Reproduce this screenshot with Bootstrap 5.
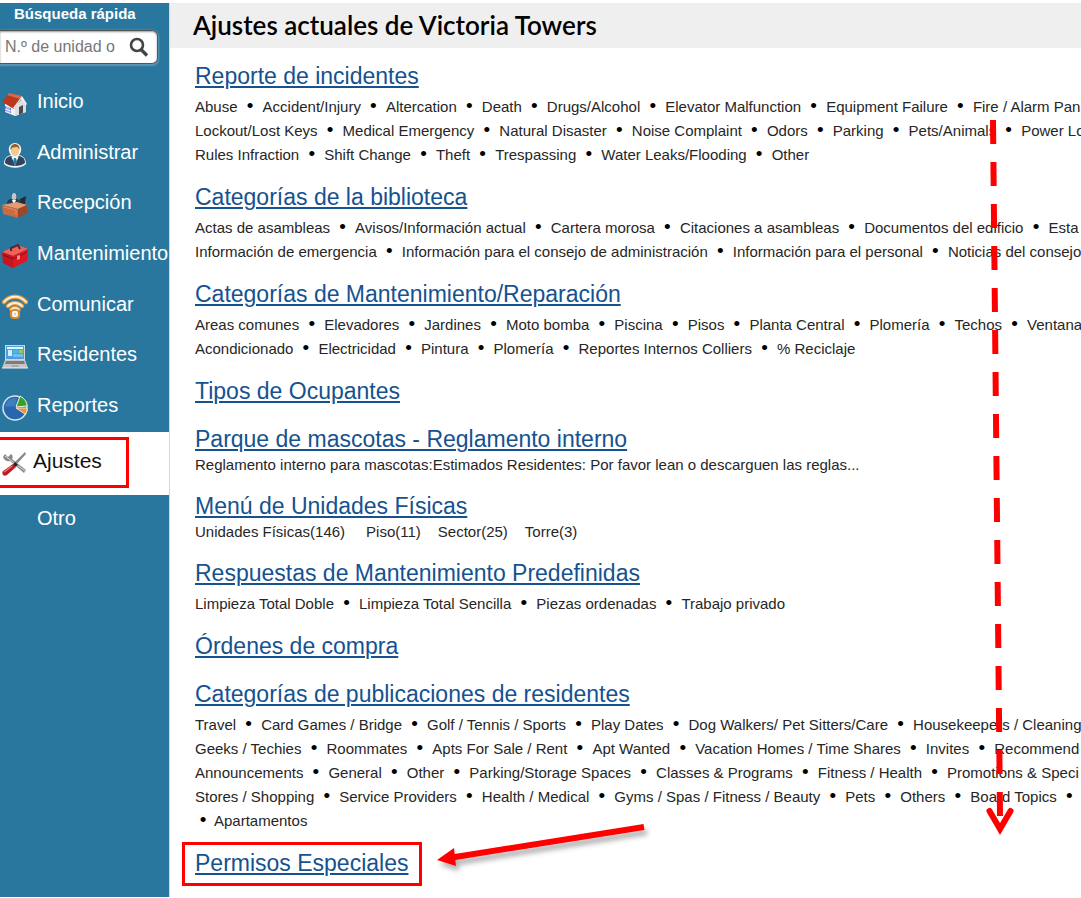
<!DOCTYPE html>
<html lang="es">
<head>
<meta charset="utf-8">
<meta name="viewport" content="width=device-width, initial-scale=1">
<title>Ajustes actuales de Victoria Towers</title>
<link href="https://cdn.jsdelivr.net/npm/bootstrap@5.3.0/dist/css/bootstrap.min.css" rel="stylesheet">
<style>
  body { font-family: "Liberation Sans", Arial, sans-serif; font-size: 15px; color: #262626; background: #fff; }
  .page { min-height: 100vh; padding: 3px 0 1px; }
  .sidebar { width: 170px; background: #29779e; border-right: 1px solid #c9dde7; }
  .quick-label { font-size: 15px; line-height: 22px; padding-left: 14px; }
  .quick-box { height: 34px; width: 158px; margin: 5px 0 12px; border: 1px solid #555; border-left: 0; border-radius: 0 6px 6px 0; box-shadow: 0 1px 2px 1px rgba(255,255,255,.25), inset 0 1px 2px rgba(0,0,0,.4); background: #fff; }
  .quick-box input { width: 118px; padding: 0 0 0 5px; font-size: 16px; line-height: 24px; background: transparent; }
  .quick-box input::placeholder { color: #777; opacity: 1; }
  .quick-box button { margin-left: 10px; line-height: 0; }
  .menu-main { height: 354px; margin-bottom: 2px; }
  .menu-item { font-size: 20px; line-height: 24px; color: #fff; text-decoration: none; white-space: nowrap; padding-left: 2px; gap: 9px; }
  .menu-item:hover { color: #fff; }
  .menu-item svg { width: 26px; height: 26px; margin-top: 6px; flex: none; }
  .menu-active { height: 63px; padding-top: 5px; background: #fff; }
  .menu-active .menu-item { color: #111; width: 129px; height: 51px; font-size: 21px; padding-bottom: 4px; border: 3px solid red; border-left: 0; gap: 5px; }
  .menu-other { height: 46px; }
  .menu-other .menu-item { padding-left: 37px; }
  .title-bar { height: 45px; background: #efefef; padding-left: 23px; }
  .title-bar h1 { font: 600 26px/45px Lato, sans-serif; color: #000; }
  .settings { padding: 10px 0 0 25px; white-space: nowrap; }
  .settings h2 { font-size: 23px; line-height: 36px; font-weight: 400; margin: 0; }
  .settings h2 a { color: #15528f; text-decoration-thickness: 2px; text-underline-offset: 2px; }
  .items { line-height: 24px; margin: 1px 0 12px; }
  .items b { display: inline-block; width: 25px; text-align: center; font-size: 19px; line-height: 20px; font-weight: 400; color: #000; }
  .items .lead-dot { width: 19px; padding-right: 3px; }
  .heading-only { margin-bottom: 12px; }
  .note { line-height: 14px; margin: 1px 0 16px; }
  .note span + span { margin-left: 17px; }
  .marked::after { content: ""; position: absolute; inset: -3px -14px -5px -13px; border: 3px solid red; pointer-events: none; }
  .arrows { pointer-events: none; }
</style>
</head>
<body>
<div class="page d-flex position-relative overflow-hidden">
  <aside class="sidebar flex-shrink-0 overflow-hidden">
    <form>
      <label class="quick-label text-white fw-bold d-block" for="quick">Búsqueda rápida</label>
      <div class="quick-box d-flex align-items-center">
        <input class="border-0" id="quick" type="text" placeholder="N.º de unidad o">
        <button class="btn border-0 p-0" type="button" aria-label="Buscar">
          <svg width="22" height="22" viewBox="0 0 22 22" fill="none" stroke="#444"><circle cx="9" cy="9" r="6" stroke-width="2.600"/><path d="M13 13.500l6 6" stroke-width="3.400"/></svg>
        </button>
      </div>
    </form>
    <nav aria-label="Principal">
      <div class="menu-main d-flex flex-column">
        <a class="menu-item d-flex align-items-center flex-fill" href="#">
          <svg viewBox="0 0 26 26"><path d="M3 12l10 4 7-8 4 4v9l-11 4-10-4z" fill="#f3f3f5"/><path d="M13 16l7-8 4 4v9l-11 4z" fill="#dedee2"/><path d="M0 11L7 2l13 3-8 13z" fill="#b9391f"/><path d="M7 2l13 3-2 3L5 4z" fill="#cf6c4d"/><path d="M20 5l5 8-1 1-5-6-7 10-1-1z" fill="#f8eee8"/><path d="M3 15l6 2v5l-6-2z" fill="#6871df"/><path d="M5 15v6M7 16v6M3 18l6 2" stroke="#eef"/><path d="M17 16l4-2v8l-4 2z" fill="#514b4b"/></svg>Inicio</a>
        <a class="menu-item d-flex align-items-center flex-fill" href="#">
          <svg viewBox="0 0 26 26"><path d="M2 22c0-6 3-8 7-9-3-3-4-11 4-12 8 1 7 9 4 12 4 1 7 3 7 9-5 5-17 5-22 0z" fill="#f2f4f6"/><path d="M3 21c0-5 3-7 7-7l3 10 3-10c4 0 7 2 7 7-4 4-16 4-20 0z" fill="#2f455d"/><path d="M9 14l4 3 4-3-4 9z" fill="#fff"/><path d="M12 16h2l1 4-2 4-2-4z" fill="#277bb5"/><ellipse cx="13" cy="8.500" rx="4" ry="5.500" fill="#f6c994"/><path d="M8.500 8c-1-8 10-8 9 0l-2-3-5 .5z" fill="#8f6325"/></svg>Administrar</a>
        <a class="menu-item d-flex align-items-center flex-fill" href="#">
          <svg viewBox="0 0 26 26"><path d="M5 13c0-5 2-6 5-6-2-3-1-6 2-6s4 3 2 6c3 0 4 2 4 6z" fill="#273b50"/><ellipse cx="12" cy="4.500" rx="2.500" ry="3.500" fill="#c2c8ca"/><path d="M10 8l2 5 2-5z" fill="#fff"/><path d="M18 7l6-3-1 8-6 1z" fill="#222c38"/><path d="M0 13l15-3 10 3-9 4z" fill="#e69a70"/><path d="M0 13l16 4v9L1 22z" fill="#c76c43"/><path d="M16 17l9-4v8l-9 5z" fill="#9f4626"/><path d="M2 15l12 3v5" fill="none" stroke="#e58b62"/></svg>Recepción</a>
        <a class="menu-item d-flex align-items-center flex-fill" href="#">
          <svg viewBox="0 0 26 26"><path d="M0 9L16 2l10 4-15 7z" fill="#f36056"/><path d="M0 9l11 4v12L1 20z" fill="#c9141c"/><path d="M11 13l15-7-1 12-14 7z" fill="#dc1823"/><path d="M1 12l10 4 14-7" fill="none" stroke="#801017"/><path d="M9 8V5l7-3 2 4" fill="none" stroke="#56282c" stroke-width="2"/><path d="M15 13l3-1v4l-3 1z" fill="#f18b86"/></svg>Mantenimiento</a>
        <a class="menu-item d-flex align-items-center flex-fill" href="#">
          <svg viewBox="0 0 26 26" fill="none" stroke-linecap="round"><g stroke="#e09a42" stroke-width="4.400"><path d="M2 8c6-7 16-7 22 0M6 12c4-4 10-4 14 0M9.500 15.500c2-2 5-2 7 0"/></g><g stroke="#fff0d8" stroke-width="1.800"><path d="M2 8c6-7 16-7 22 0M6 12c4-4 10-4 14 0M9.500 15.500c2-2 5-2 7 0"/></g><rect x="9" y="16" width="8" height="8" rx="3" fill="#fff" stroke="#dd8c2c" stroke-width="2.200"/><circle cx="13" cy="20" r="1.500" fill="#ccd"/></svg>Comunicar</a>
        <a class="menu-item d-flex align-items-center flex-fill" href="#">
          <svg viewBox="0 0 26 26"><path d="M3 1h20v15H3z" fill="#d1d5d9"/><path d="M4 2h18v13H4z" fill="#4d9de0"/><path d="M5 3h16v2H5z" fill="#e8f4ff"/><path d="M6 6h4v6H6z" fill="#d9efff"/><path d="M11 6h5v3h-5z" fill="#30c6df"/><path d="M17 6h4v3h-4z" fill="#8bd34f"/><path d="M11 10h10v3H11z" fill="#78bcf2"/><path d="M3 16h20l3 8H0z" fill="#c5c5c5"/><path d="M4 17h18l1 3H3z" fill="#7c7c7c"/><path d="M10 21h6l1 2H9z" fill="#aaa"/><path d="M0 24h26" stroke="#eee"/></svg>Residentes</a>
        <a class="menu-item d-flex align-items-center flex-fill" href="#">
          <svg viewBox="0 0 26 26"><circle cx="13" cy="13" r="12" fill="#2867ad" stroke="#d8e3ee" stroke-width="1.500"/><path d="M14 12l4-11c5 3 7 6 7 10z" fill="#36a127" stroke="#eef6e9"/><path d="M14 13h11c0 3 0 4-2 6z" fill="#e8943b" stroke="#f6dfc8"/><path d="M3 12C4 4 10 3 15 3l-2 8z" fill="#5d96cb" opacity=".5"/></svg>Reportes</a>
      </div>
      <div class="menu-active">
        <a class="menu-item d-flex align-items-center" href="#" aria-current="page">
          <svg viewBox="0 0 26 26"><path d="M3 3l3 3 3-3c2 1 2 4 1 5l14 11-2 3L8 10C5 11 2 9 1 6z" fill="#898989"/><path d="M3 5l20 15" stroke="#ddd" stroke-width="1"/><path d="M23 1l1 2-11 12-2-2z" fill="#888"/><path d="M13 11l3 3-3 2-2-2z" fill="#222"/><path d="M11 13l3 3-9 8c-3 2-6-1-4-4z" fill="#bd1c24"/><path d="M10 15l-8 6" stroke="#f17878" stroke-width="1.500"/></svg>Ajustes</a>
      </div>
      <div class="menu-other d-flex"><a class="menu-item d-flex align-items-center" href="#">Otro</a></div>
    </nav>
  </aside>

  <main class="flex-fill overflow-hidden">
    <header class="title-bar"><h1 class="m-0">Ajustes actuales de Victoria Towers</h1></header>
    <div class="settings">
      <h2><a href="#">Reporte de incidentes</a></h2>
      <p class="items">Abuse<b>•</b>Accident/Injury<b>•</b>Altercation<b>•</b>Death<b>•</b>Drugs/Alcohol<b>•</b>Elevator Malfunction<b>•</b>Equipment Failure<b>•</b>Fire / Alarm Pan<br>
        Lockout/Lost Keys<b>•</b>Medical Emergency<b>•</b>Natural Disaster<b>•</b>Noise Complaint<b>•</b>Odors<b>•</b>Parking<b>•</b>Pets/Animals<b>•</b>Power Lo<br>
        Rules Infraction<b>•</b>Shift Change<b>•</b>Theft<b>•</b>Trespassing<b>•</b>Water Leaks/Flooding<b>•</b>Other</p>

      <h2><a href="#">Categorías de la biblioteca</a></h2>
      <p class="items">Actas de asambleas<b>•</b>Avisos/Información actual<b>•</b>Cartera morosa<b>•</b>Citaciones a asambleas<b>•</b>Documentos del edificio<b>•</b>Esta<br>
        Información de emergencia<b>•</b>Información para el consejo de administración<b>•</b>Información para el personal<b>•</b>Noticias del consejo</p>

      <h2><a href="#">Categorías de Mantenimiento/Reparación</a></h2>
      <p class="items">Areas comunes<b>•</b>Elevadores<b>•</b>Jardines<b>•</b>Moto bomba<b>•</b>Piscina<b>•</b>Pisos<b>•</b>Planta Central<b>•</b>Plomería<b>•</b>Techos<b>•</b>Ventana<br>
        Acondicionado<b>•</b>Electricidad<b>•</b>Pintura<b>•</b>Plomería<b>•</b>Reportes Internos Colliers<b>•</b>% Reciclaje</p>

      <div class="heading-only"><h2><a href="#">Tipos de Ocupantes</a></h2></div>

      <h2><a href="#">Parque de mascotas - Reglamento interno</a></h2>
      <p class="note">Reglamento interno para mascotas:Estimados Residentes: Por favor lean o descarguen las reglas...</p>

      <h2><a href="#">Menú de Unidades Físicas</a></h2>
      <p class="note"><span class="me-1">Unidades Físicas(146)</span><span>Piso(11)</span><span>Sector(25)</span><span>Torre(3)</span></p>

      <h2><a href="#">Respuestas de Mantenimiento Predefinidas</a></h2>
      <p class="items">Limpieza Total Doble<b>•</b>Limpieza Total Sencilla<b>•</b>Piezas ordenadas<b>•</b>Trabajo privado</p>

      <div class="heading-only"><h2><a href="#">Órdenes de compra</a></h2></div>

      <h2><a href="#">Categorías de publicaciones de residentes</a></h2>
      <p class="items">Travel<b>•</b>Card Games / Bridge<b>•</b>Golf / Tennis / Sports<b>•</b>Play Dates<b>•</b>Dog Walkers/ Pet Sitters/Care<b>•</b>Housekeepers / Cleaning<br>
        Geeks / Techies<b>•</b>Roommates<b>•</b>Apts For Sale / Rent<b>•</b>Apt Wanted<b>•</b>Vacation Homes / Time Shares<b>•</b>Invites<b>•</b>Recommend<br>
        Announcements<b>•</b>General<b>•</b>Other<b>•</b>Parking/Storage Spaces<b>•</b>Classes &amp; Programs<b>•</b>Fitness / Health<b>•</b>Promotions &amp; Speci<br>
        Stores / Shopping<b>•</b>Service Providers<b>•</b>Health / Medical<b>•</b>Gyms / Spas / Fitness / Beauty<b>•</b>Pets<b>•</b>Others<b>•</b>Board Topics<b>•</b><br>
        <b class="lead-dot">•</b>Apartamentos</p>

      <h2 class="marked d-inline-block position-relative"><a href="#">Permisos Especiales</a></h2>
    </div>
  </main>

  <svg class="arrows position-absolute top-0 start-0 w-100 h-100" aria-hidden="true">
    <defs><filter id="soft" x="-10%" y="-40%" width="120%" height="200%"><feDropShadow dx="3" dy="5" stdDeviation="2.500" flood-color="#000" flood-opacity=".3"/></filter></defs>
    <path d="M993 120L1000 816" stroke="red" stroke-width="6" stroke-dasharray="24 18"/>
    <path d="M989.500 811L1000 829L1010.500 811" fill="none" stroke="red" stroke-width="6" stroke-linecap="round"/>
    <g filter="url(#soft)"><path d="M644 827L452 857.500" stroke="red" stroke-width="6"/><path d="M437 860l17-12 2 18z" fill="red"/></g>
  </svg>
</div>
<script src="https://cdn.jsdelivr.net/npm/bootstrap@5.3.0/dist/js/bootstrap.bundle.min.js"></script>
</body>
</html>
